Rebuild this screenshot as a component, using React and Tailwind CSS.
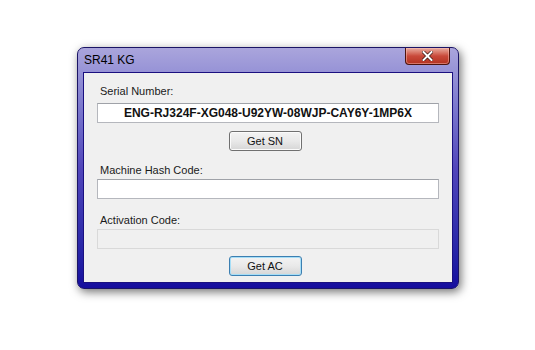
import { useState } from 'react';

const font = { fontFamily: '"Liberation Sans", Arial, sans-serif' };

function TextBox({ value, disabled }) {
  return (
    <div
      className={`mx-[13px] h-[20px] w-[342px] flex items-center justify-center border ${
        disabled ? 'bg-[#f0f0f0] border-[#d9d9d9]' : 'bg-white border-[#b5b7bd] border-t-[#9fa2a8]'
      }`}
    >
      {value && <span className="text-[12px] font-bold text-[#111] leading-none">{value}</span>}
    </div>
  );
}

function Button({ label, active }) {
  return (
    <button
      className={`w-[73px] h-[20px] rounded-[3px] border text-[11px] text-[#111] leading-none bg-gradient-to-b from-[#f3f3f3] via-[#e9e9e9] to-[#d6d6d6] ${
        active ? 'border-[#3c7fb1] shadow-[inset_0_0_0_1px_#a6def7]' : 'border-[#707070] shadow-[inset_0_0_0_1px_#fbfbfb]'
      }`}
    >
      {label}
    </button>
  );
}

export default function App() {
  const [serial] = useState('ENG-RJ324F-XG048-U92YW-08WJP-CAY6Y-1MP6X');

  return (
    <div className="w-[535px] h-[350px] bg-white pt-[47px] pl-[77px]" style={font}>
      <div className="w-[382px] h-[242px] rounded-[7px] border border-[#1b1466] bg-gradient-to-b from-[#aaa5dc] via-[#5246bb] to-[#160c9e] shadow-[2px_3px_10px_rgba(0,0,0,0.55)] flex flex-col">
        {/* Title bar */}
        <div className="h-[24px] flex items-start justify-between">
          <span className="pl-[6px] pt-[6px] text-[12px] text-black leading-none">SR41 KG</span>
          <div className="mr-[8px] w-[45px] h-[17px] rounded-b-[4px] border border-t-0 border-[#4d130c] bg-gradient-to-b from-[#e8aca0] via-[#c9493a] to-[#b3321f] flex items-center justify-center shadow-[inset_0_0_0_1px_rgba(255,200,190,0.45)]">
            <svg width="11" height="10" viewBox="0 0 11 10">
              <path d="M1.5 1 L9.5 9 M9.5 1 L1.5 9" stroke="#3a120d" strokeWidth="3.4" strokeLinecap="square" />
              <path d="M1.5 1 L9.5 9 M9.5 1 L1.5 9" stroke="#ffffff" strokeWidth="2" strokeLinecap="square" />
            </svg>
          </div>
        </div>

        {/* Client area */}
        <div className="mx-[5px] h-[211px] border border-[#1a1080] bg-[#f0f0f0] flex flex-col text-[11px] text-[#1a1a1a]">
          <div className="pl-[16px] pt-[13px] h-[30px] leading-none">Serial Number:</div>
          <TextBox value={serial} />
          <div className="flex justify-center pt-[8px] pr-[6px]">
            <Button label="Get SN" />
          </div>
          <div className="pl-[16px] pt-[14px] h-[28px] leading-none">Machine Hash Code:</div>
          <TextBox />
          <div className="pl-[16px] pt-[16px] h-[30px] leading-none">Activation Code:</div>
          <TextBox disabled />
          <div className="flex justify-center pt-[7px] pr-[6px]">
            <Button label="Get AC" active />
          </div>
        </div>
      </div>
    </div>
  );
}
